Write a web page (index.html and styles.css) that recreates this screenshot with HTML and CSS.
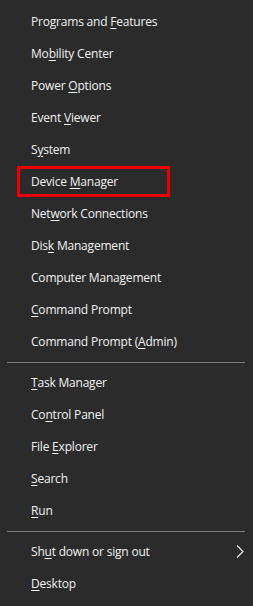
FILE: index.html
```html
<!DOCTYPE html>
<html lang="en">
<head>
    <meta charset="UTF-8">
    <meta name="viewport" content="width=device-width, initial-scale=1.0">
    <title>Quick Link Menu</title>
    <link rel="stylesheet" href="styles.css">
</head>
<body>
    <div class="menu">
        <div class="group">
            <div class="item">Programs and <u>F</u>eatures</div>
            <div class="item">Mo<u>b</u>ility Center</div>
            <div class="item">Power <u>O</u>ptions</div>
            <div class="item">Event <u>V</u>iewer</div>
            <div class="item">S<u>y</u>stem</div>
            <div class="item highlighted">Device <u>M</u>anager</div>
            <div class="item">Net<u>w</u>ork Connections</div>
            <div class="item">Dis<u>k</u> Management</div>
            <div class="item">Computer Mana<u>g</u>ement</div>
            <div class="item"><u>C</u>ommand Prompt</div>
            <div class="item">Command Prompt (<u>A</u>dmin)</div>
        </div>
        <div class="separator"></div>
        <div class="group">
            <div class="item"><u>T</u>ask Manager</div>
            <div class="item">Co<u>n</u>trol Panel</div>
            <div class="item">File <u>E</u>xplorer</div>
            <div class="item"><u>S</u>earch</div>
            <div class="item"><u>R</u>un</div>
        </div>
        <div class="separator"></div>
        <div class="group">
            <div class="item has-sub">
                Sh<u>u</u>t down or sign out
                <svg class="chevron" width="8" height="13" viewBox="0 0 8 13">
                    <path d="M1 0.5 L7 6.5 L1 12.5" fill="none" stroke="#e8e8e8" stroke-width="1.2"/>
                </svg>
            </div>
            <div class="item"><u>D</u>esktop</div>
        </div>
    </div>
</body>
</html>
```

FILE: styles.css
```css
body, html {
    margin: 0;
    padding: 0;
    background: #2b2b2b;
    font-family: 'Open Sans', 'Noto Sans', sans-serif;
    color: #f2f2f2;
}
.menu {
    width: 253px;
    height: 606px;
    padding-top: 6px;
    box-sizing: border-box;
}
.item {
    height: 32px;
    line-height: 32px;
    padding-left: 31px;
    font-size: 12px;
    letter-spacing: -0.2px;
    white-space: nowrap;
}
.item u {
    text-decoration-thickness: 1px;
    text-underline-offset: 2px;
}
.highlighted,
.has-sub {
    position: relative;
}
.highlighted::before {
    content: '';
    position: absolute;
    left: 17px;
    top: 0;
    width: 147px;
    height: 25px;
    border: 3px solid #ee0000;
}
.chevron {
    position: absolute;
    right: 9px;
    top: 9px;
}
.separator {
    height: 1px;
    margin: 4px 8px 4px 7px;
    background: #7a7a7a;
}
```
